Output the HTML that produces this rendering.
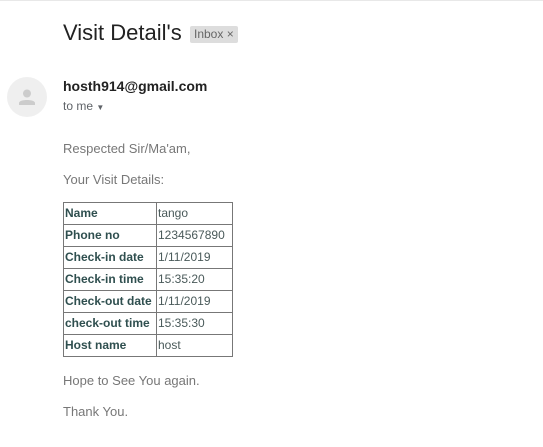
<!DOCTYPE html>
<html><head><meta charset="utf-8"><style>
body{margin:0;width:543px;height:447px;background:#fff;font-family:"Liberation Sans",Arial,sans-serif;position:relative;overflow:hidden}
.top{position:absolute;left:0;top:0;width:543px;height:1px;background:#e8e8e8}
.title{position:absolute;left:63px;top:20px;font-size:22px;color:#222}
.tag{position:absolute;left:190px;top:26px;background:#ddd;color:#666;font-size:12px;padding:1px 4px;border-radius:2px;line-height:15px}
.av{position:absolute;left:7px;top:77px;width:40px;height:40px;border-radius:50%;background:#efefef}
.from{position:absolute;left:63px;top:78px;font-size:14px;font-weight:bold;color:#222}
.to{position:absolute;left:63px;top:99px;font-size:12px;color:#5f6368}
.p{position:absolute;left:63px;font-size:13px;color:#777}
table{position:absolute;left:63px;top:202px;border-collapse:collapse;table-layout:fixed;width:170px;font-size:12px;color:#2f4f4f}
td{border:1px solid #777;height:21px;padding:0 1px;line-height:21px;white-space:nowrap;overflow:hidden}
td:first-child{font-weight:bold;width:90px}
td:last-child{color:#4a5a5a}
</style></head><body>
<div class="top"></div>
<div class="title">Visit Detail's</div>
<div class="tag">Inbox ×</div>
<div class="av"><svg width="40" height="40"><circle cx="20" cy="16.5" r="4" fill="#ccc"/><path d="M12 26c0-4 16-4 16 0v2H12z" fill="#ccc"/></svg></div>
<div class="from">hosth914@gmail.com</div>
<div class="to">to me <span style="font-size:8px">▼</span></div>
<div class="p" style="top:141px">Respected Sir/Ma'am,</div>
<div class="p" style="top:172px">Your Visit Details:</div>
<table>
<tr><td>Name</td><td>tango</td></tr>
<tr><td>Phone no</td><td>1234567890</td></tr>
<tr><td>Check-in date</td><td>1/11/2019</td></tr>
<tr><td>Check-in time</td><td>15:35:20</td></tr>
<tr><td>Check-out date</td><td>1/11/2019</td></tr>
<tr><td>check-out time</td><td>15:35:30</td></tr>
<tr><td>Host name</td><td>host</td></tr>
</table>
<div class="p" style="top:373px">Hope to See You again.</div>
<div class="p" style="top:404px">Thank You.</div>
</body></html>
